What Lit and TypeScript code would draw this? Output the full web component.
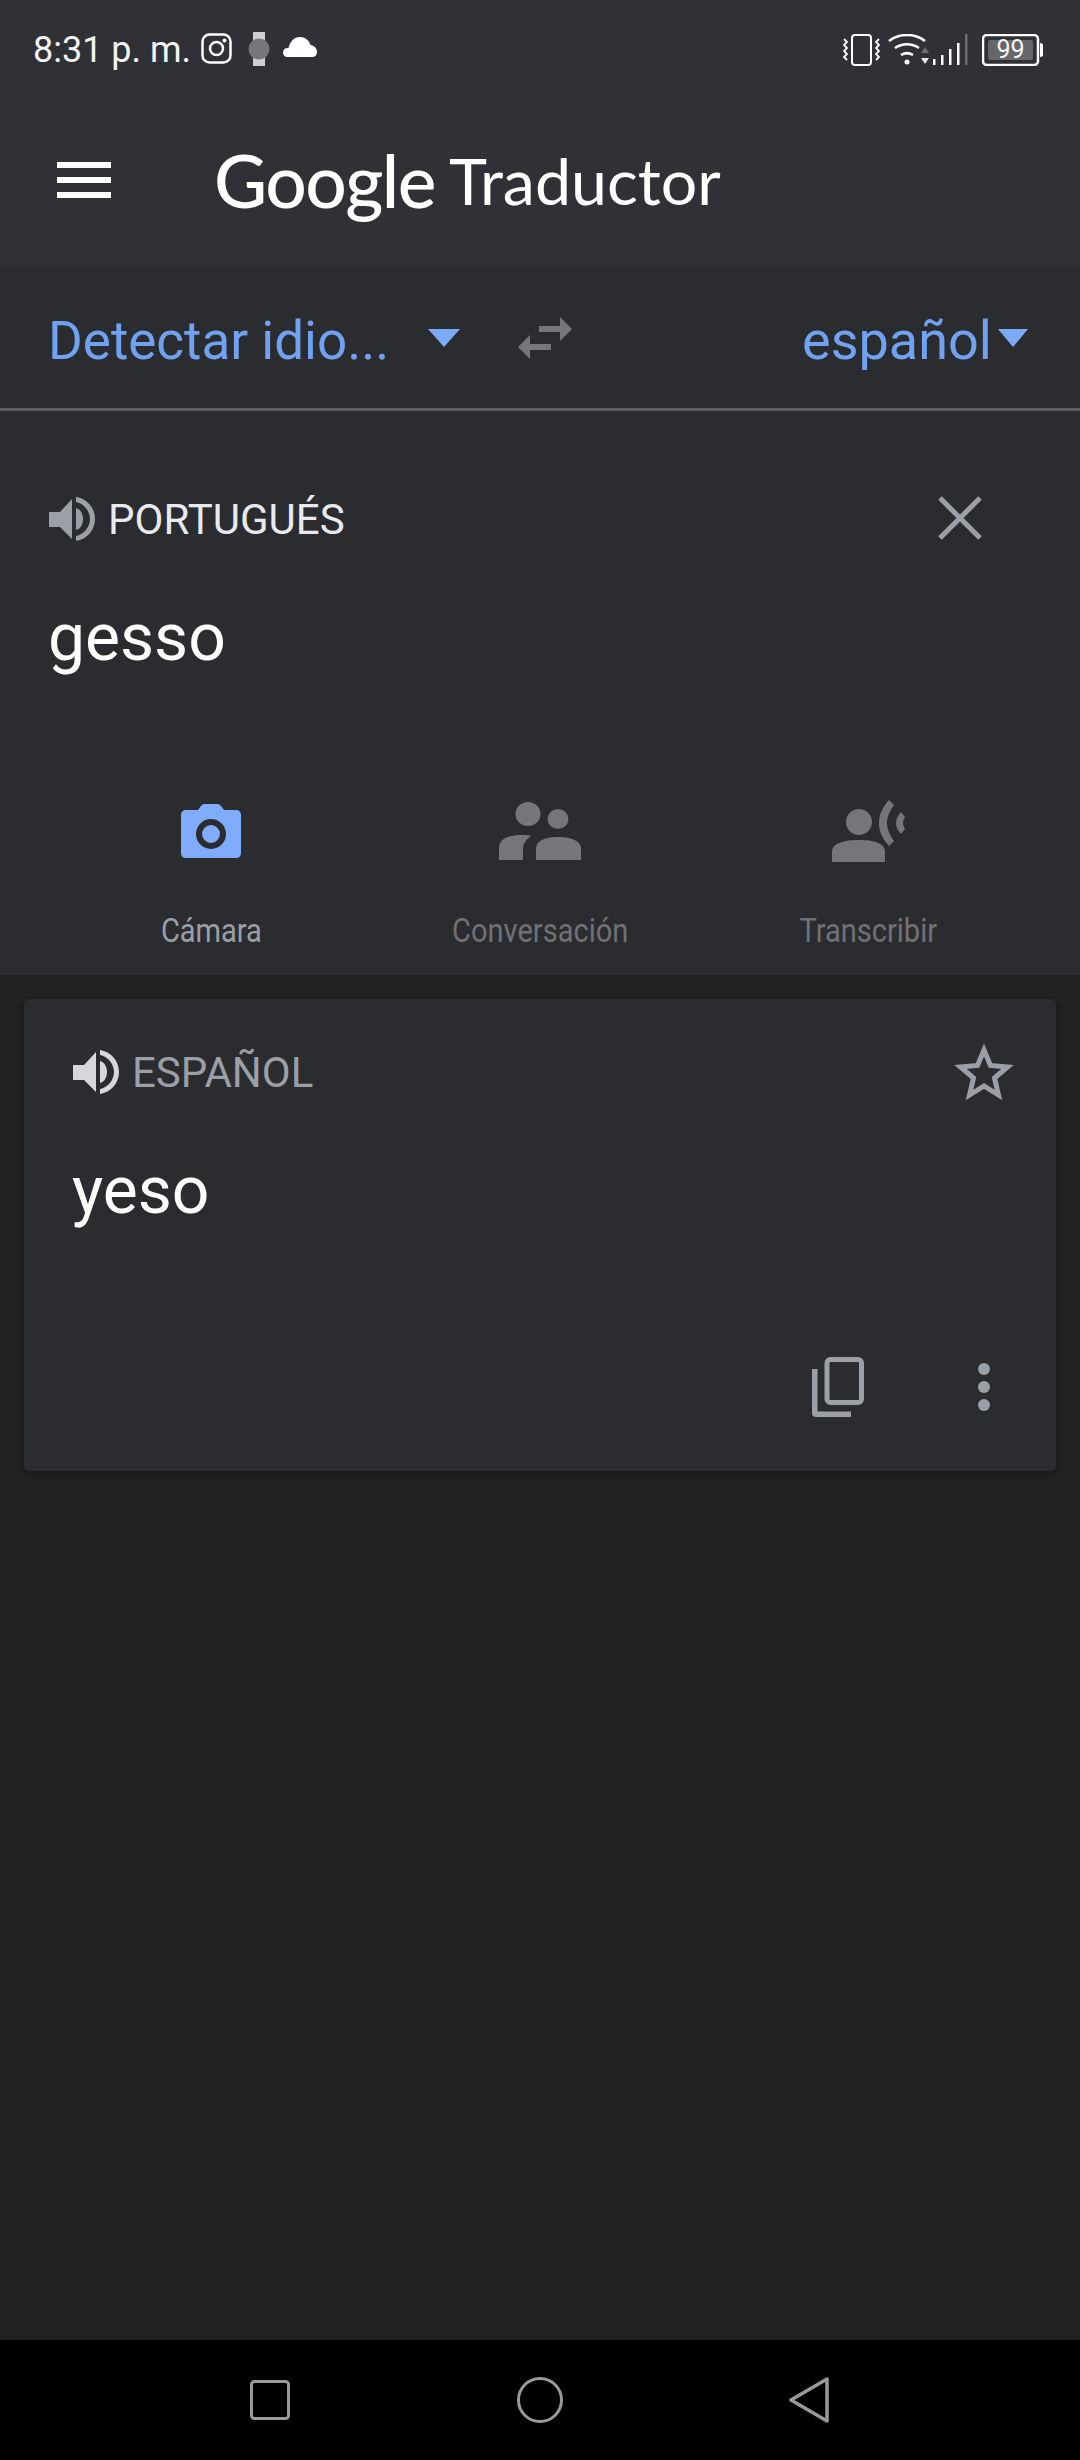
import { LitElement, html, css, svg } from 'lit';
import { customElement } from 'lit/decorators.js';

const speaker = (color: string) => html`
  <svg class="speaker" width="46" height="44" viewBox="0 0 46 44">
    <path fill=${color} d="M0 15h11L23 2v40L11 30H0z"/>
    <path fill=${color} d="M27 11c4 1 7 5 7 11s-3 10-7 11zM27 0c11 1.500 19 11 19 22s-8 20.500-19 22v-5c8-1.500 14-9 14-17S35 6.500 27 5z"/>
  </svg>`;

@customElement('app-root')
export class AppRoot extends LitElement {
  static styles = css`
    :host {
      display: block;
      width: 1080px;
      height: 2460px;
      background: #212121;
      font-family: Roboto, 'Noto Sans', sans-serif;
      color: #fff;
    }
    .page {
      height: 2460px;
      display: flex;
      flex-direction: column;
    }
    svg {
      display: block;
      flex: none;
    }

    .top {
      height: 268px;
      background: #303136;
    }
    .status {
      height: 100px;
      display: flex;
      align-items: center;
      justify-content: space-between;
      padding: 0 37px 0 33px;
    }
    .status-side {
      display: flex;
      align-items: center;
    }
    .time {
      font-size: 36px;
      color: #f4f4f4;
      margin-right: 10px;
    }
    .ig {
      margin-top: -2px;
    }
    .watch {
      margin-left: 15px;
      margin-top: -2px;
    }
    .cloud {
      margin: -6px 0 0 13px;
    }
    .wifi {
      margin-left: 8px;
    }
    .battery {
      margin-left: 14px;
    }
    .appbar {
      height: 168px;
      display: flex;
      align-items: center;
      padding-left: 57px;
      padding-bottom: 8px;
      box-sizing: border-box;
    }
    .burger {
      width: 54px;
      display: flex;
      flex-direction: column;
      gap: 9px;
      margin-right: 103px;
    }
    .burger i {
      height: 6px;
      background: #fff;
    }
    .brand {
      font-family: Lato, Roboto, sans-serif;
      font-size: 73px;
      font-weight: 500;
      letter-spacing: -1.500px;
      margin-right: 14px;
    }
    .title {
      font-family: Lato, Roboto, sans-serif;
      font-size: 64.500px;
    }

    .langs {
      height: 140px;
      background: #2b2c30;
      border-bottom: 3px solid #5f6062;
      display: flex;
      align-items: center;
      color: #71a2f2;
      font-size: 53px;
      padding: 0 52px 0 48px;
    }
    .langs span {
      padding-top: 5px;
    }
    .langs .source {
      width: 380px;
    }
    .langs .swap {
      margin: 0 0 0 58px;
    }
    .langs .target {
      margin-left: auto;
      margin-right: 6px;
      font-size: 54px;
    }

    .input {
      height: 564px;
      background: #2b2c30;
      display: flex;
      flex-direction: column;
    }
    .label-row {
      display: flex;
      align-items: center;
      font-size: 42px;
    }
    .input .label-row {
      height: 46px;
      margin-top: 85px;
      padding: 0 49px;
      color: #e8eaed;
    }
    .speaker {
      margin-right: 13px;
    }
    .close {
      margin-left: auto;
      margin-right: 49px;
      margin-top: -2px;
    }
    .text {
      font-size: 66px;
      line-height: 76px;
    }
    .input .text {
      margin: 58px 0 0 48px;
    }
    .actions {
      margin-top: auto;
      padding: 0 47px 25px;
      display: grid;
      grid-template-columns: repeat(3, 1fr);
    }
    .action {
      display: flex;
      flex-direction: column;
      align-items: center;
      font-size: 33px;
      color: #707175;
    }
    .action.on {
      color: #9aa0a6;
    }
    .action .glyph {
      height: 66px;
      display: flex;
      align-items: center;
      margin-bottom: 47px;
    }
    .action span {
      transform: scaleX(0.88);
    }

    .card {
      height: 472px;
      box-sizing: border-box;
      margin: 24px 24px 0;
      background: #2b2c30;
      border-radius: 5px;
      box-shadow: 0 2px 4px rgba(0, 0, 0, 0.3);
      padding: 50px 0 0 49px;
      display: flex;
      flex-direction: column;
    }
    .card .label-row {
      height: 46px;
      color: #9aa0a6;
      padding-right: 42px;
    }
    .star {
      margin-left: auto;
      margin-top: -3px;
    }
    .card .text {
      margin-top: 58px;
      margin-left: -1px;
    }
    .card-tools {
      margin-top: auto;
      margin-bottom: 54px;
      display: flex;
      justify-content: flex-end;
      align-items: center;
      padding-right: 66px;
    }
    .card-tools .copy {
      margin-right: 114px;
    }

    .nav {
      margin-top: auto;
      height: 120px;
      background: #000;
      display: grid;
      grid-template-columns: 1fr auto 1fr;
      align-items: center;
      padding: 0 251px 0 250px;
    }
    .nav svg:last-child {
      justify-self: end;
    }
  `;

  render() {
    return html`
      <div class="page">
        <div class="top">
          <div class="status">
            <div class="status-side">
              <span class="time">8:31 p. m.</span>
              ${this.leftStatusIcons()}
            </div>
            <div class="status-side">${this.rightStatusIcons()}</div>
          </div>
          <div class="appbar">
            <div class="burger"><i></i><i></i><i></i></div>
            <span class="brand">Google</span>
            <span class="title">Traductor</span>
          </div>
        </div>

        <div class="langs">
          <span class="source">Detectar idio...</span>
          <svg width="32" height="18" viewBox="0 0 32 18"><path fill="#7baaf7" d="M0 0h32L16 18z"/></svg>
          <svg class="swap" width="54" height="42" viewBox="0 0 54 42">
            <path fill="#76777a" d="M21 9h21V0l12 12-12 12v-9H21zM0 30l12-12v9h21v6H12v9z"/>
          </svg>
          <span class="target">español</span>
          <svg width="30" height="18" viewBox="0 0 30 18"><path fill="#7baaf7" d="M0 0h30L15 18z"/></svg>
        </div>

        <div class="input">
          <div class="label-row">
            ${speaker('#9aa0a6')}
            <span>PORTUGUÉS</span>
            <svg class="close" width="44" height="44" viewBox="0 0 44 44">
              <path stroke="#9aa0a6" stroke-width="5" d="M2 2l40 40M42 2L2 42"/>
            </svg>
          </div>
          <div class="text">gesso</div>
          <div class="actions">
            <div class="action on">
              <div class="glyph">
                <svg width="60" height="54" viewBox="0 0 60 54">
                  <path fill="#7fadfb" d="M5 6h12l3-4c1-1.300 2-2 3.500-2h13c1.500 0 2.500.700 3.500 2l3 4h12c3 0 5 2 5 5v38c0 3-2 5-5 5H5c-3 0-5-2-5-5V11c0-3 2-5 5-5z"/>
                  <circle cx="30" cy="30" r="12" fill="#7fadfb" stroke="#2b2c30" stroke-width="6"/>
                </svg>
              </div>
              <span>Cámara</span>
            </div>
            <div class="action">
              <div class="glyph">
                <svg width="82" height="58" viewBox="0 0 82 58">
                  <g fill="#757679">
                    <ellipse cx="29" cy="12" rx="12.500" ry="12"/>
                    <ellipse cx="59" cy="17" rx="10.500" ry="10"/>
                    <path d="M0 58V46c0-10 11-13 23-13 4 0 7 .300 9 1-4 3-8 7-8 13v11z"/>
                    <path d="M37 58V47c0-9 10-12 22-12s23 3 23 12v11z"/>
                  </g>
                </svg>
              </div>
              <span>Conversación</span>
            </div>
            <div class="action">
              <div class="glyph">
                <svg width="74" height="62" viewBox="0 0 74 62">
                  <g fill="#757679">
                    <ellipse cx="27" cy="22" rx="13" ry="13"/>
                    <path d="M0 62V52c0-9 12-12 27-12s26 3 26 12v10z"/>
                    <path d="M57 0l5 5c-5 7-7 13-7 18s2 11 7 18l-5 5c-7-8-10-15-10-23S50 8 57 0z"/>
                    <path d="M69 12l4 5c-1 2-2 4-2 6s1 4 2 6l-4 5c-3-3-5-7-5-11s2-8 5-11z"/>
                  </g>
                </svg>
              </div>
              <span>Transcribir</span>
            </div>
          </div>
        </div>

        <div class="card">
          <div class="label-row">
            ${speaker('#d5d7d8')}
            <span>ESPAÑOL</span>
            <svg class="star" width="60" height="58" viewBox="0 0 60 58">
              <path fill="none" stroke="#9aa0a6" stroke-width="5" d="M30 8l6.500 15.500 17 1.500-13 11 4 17L30 44l-14.500 9 4-17-13-11 17-1.500z"/>
            </svg>
          </div>
          <div class="text">yeso</div>
          <div class="card-tools">
            <svg class="copy" width="52" height="60" viewBox="0 0 52 60">
              <path fill="#9aa0a6" d="M0 12h5.500v42.500H39V60H4c-2.500 0-4-1.500-4-4z"/>
              <rect x="15" y="2.500" width="34.500" height="43" rx="3.500" fill="none" stroke="#9aa0a6" stroke-width="5"/>
            </svg>
            <svg width="12" height="48" viewBox="0 0 12 48">
              <g fill="#9aa0a6"><circle cx="6" cy="6" r="6"/><circle cx="6" cy="24" r="6"/><circle cx="6" cy="42" r="6"/></g>
            </svg>
          </div>
        </div>

        <div class="nav">
          <svg width="40" height="40" viewBox="0 0 40 40">
            <rect x="1.500" y="1.500" width="37" height="37" rx="3" fill="none" stroke="#9a9a9a" stroke-width="3"/>
          </svg>
          <svg width="46" height="46" viewBox="0 0 46 46">
            <circle cx="23" cy="23" r="21.500" fill="none" stroke="#9a9a9a" stroke-width="3"/>
          </svg>
          <svg width="40" height="46" viewBox="0 0 40 46">
            <path fill="none" stroke="#9a9a9a" stroke-width="3.500" stroke-linejoin="round" d="M38 2v42L2 23z"/>
          </svg>
        </div>
      </div>
    `;
  }

  leftStatusIcons() {
    return html`
      <svg class="ig" width="32" height="32" viewBox="0 0 32 32">
        <rect x="1.500" y="1.500" width="28" height="28" rx="7" fill="none" stroke="#fff" stroke-width="2.500"/>
        <circle cx="15.500" cy="15.500" r="6.500" fill="none" stroke="#fff" stroke-width="2.500"/>
        <circle cx="23.500" cy="7.500" r="2" fill="#fff"/>
      </svg>
      <svg class="watch" width="22" height="34" viewBox="0 0 22 34">
        <rect x="5" y="0" width="12" height="34" fill="#cfcfcf"/>
        <circle cx="11" cy="17" r="10.500" fill="#76777a"/>
      </svg>
      <svg class="cloud" width="34" height="20" viewBox="0 0 34 20">
        <path fill="#fff" d="M4 20c-2 0-4-2-4-4.500S2 11 4.500 11c.500 0 1 0 1 0C7 4.500 11 0 17 0c5 0 9 3 10.500 8C31 8.500 34 11 34 15c0 3-2 5-5 5z"/>
      </svg>
    `;
  }

  rightStatusIcons() {
    return html`
      <svg width="37" height="32" viewBox="0 0 37 32">
        <rect x="9" y="1" width="19" height="30" rx="3" fill="none" stroke="#fff" stroke-width="2"/>
        <path fill="none" stroke="#fff" stroke-width="1.800" d="M1 5l3 3-3 3 3 3-3 3 3 3-3 3 3 3M36 5l-3 3 3 3-3 3 3 3-3 3 3 3-3 3"/>
      </svg>
      <svg class="wifi" width="80" height="32" viewBox="0 0 80 32">
        <path fill="none" stroke="#fff" stroke-width="2.500" d="M1 7c10-8 26-8 36 0M7 14c7-5 17-5 24 0M13 21c4-2.500 8-2.500 12 0"/>
        <circle cx="19" cy="28" r="2.500" fill="#fff"/>
        <path fill="#6d6e70" d="M33 19l4-6 4 6z"/>
        <path fill="#e8e8e8" d="M33 24h8l-4 6z"/>
        <g fill="#fff">
          <rect x="45" y="25" width="2.500" height="6"/>
          <rect x="53" y="21" width="2.500" height="10"/>
          <rect x="61" y="15" width="2.500" height="16"/>
          <rect x="69" y="9" width="2.500" height="22"/>
        </g>
        <rect x="77" y="0" width="2.500" height="31" fill="#6d6e70"/>
      </svg>
      <svg class="battery" width="61" height="32" viewBox="0 0 61 32">
        <rect x="1" y="1" width="55" height="30" rx="4" fill="none" stroke="#fff" stroke-width="2.500"/>
        <rect x="6" y="6" width="45" height="20" rx="2" fill="#66676a"/>
        <path fill="#fff" d="M58 9c2 0 3 1 3 2v10c0 1-1 2-3 2z"/>
        ${svg`<text x="28.500" y="24" text-anchor="middle" font-family="Roboto" font-size="25" fill="#f4f4f4">99</text>`}
      </svg>
    `;
  }
}
